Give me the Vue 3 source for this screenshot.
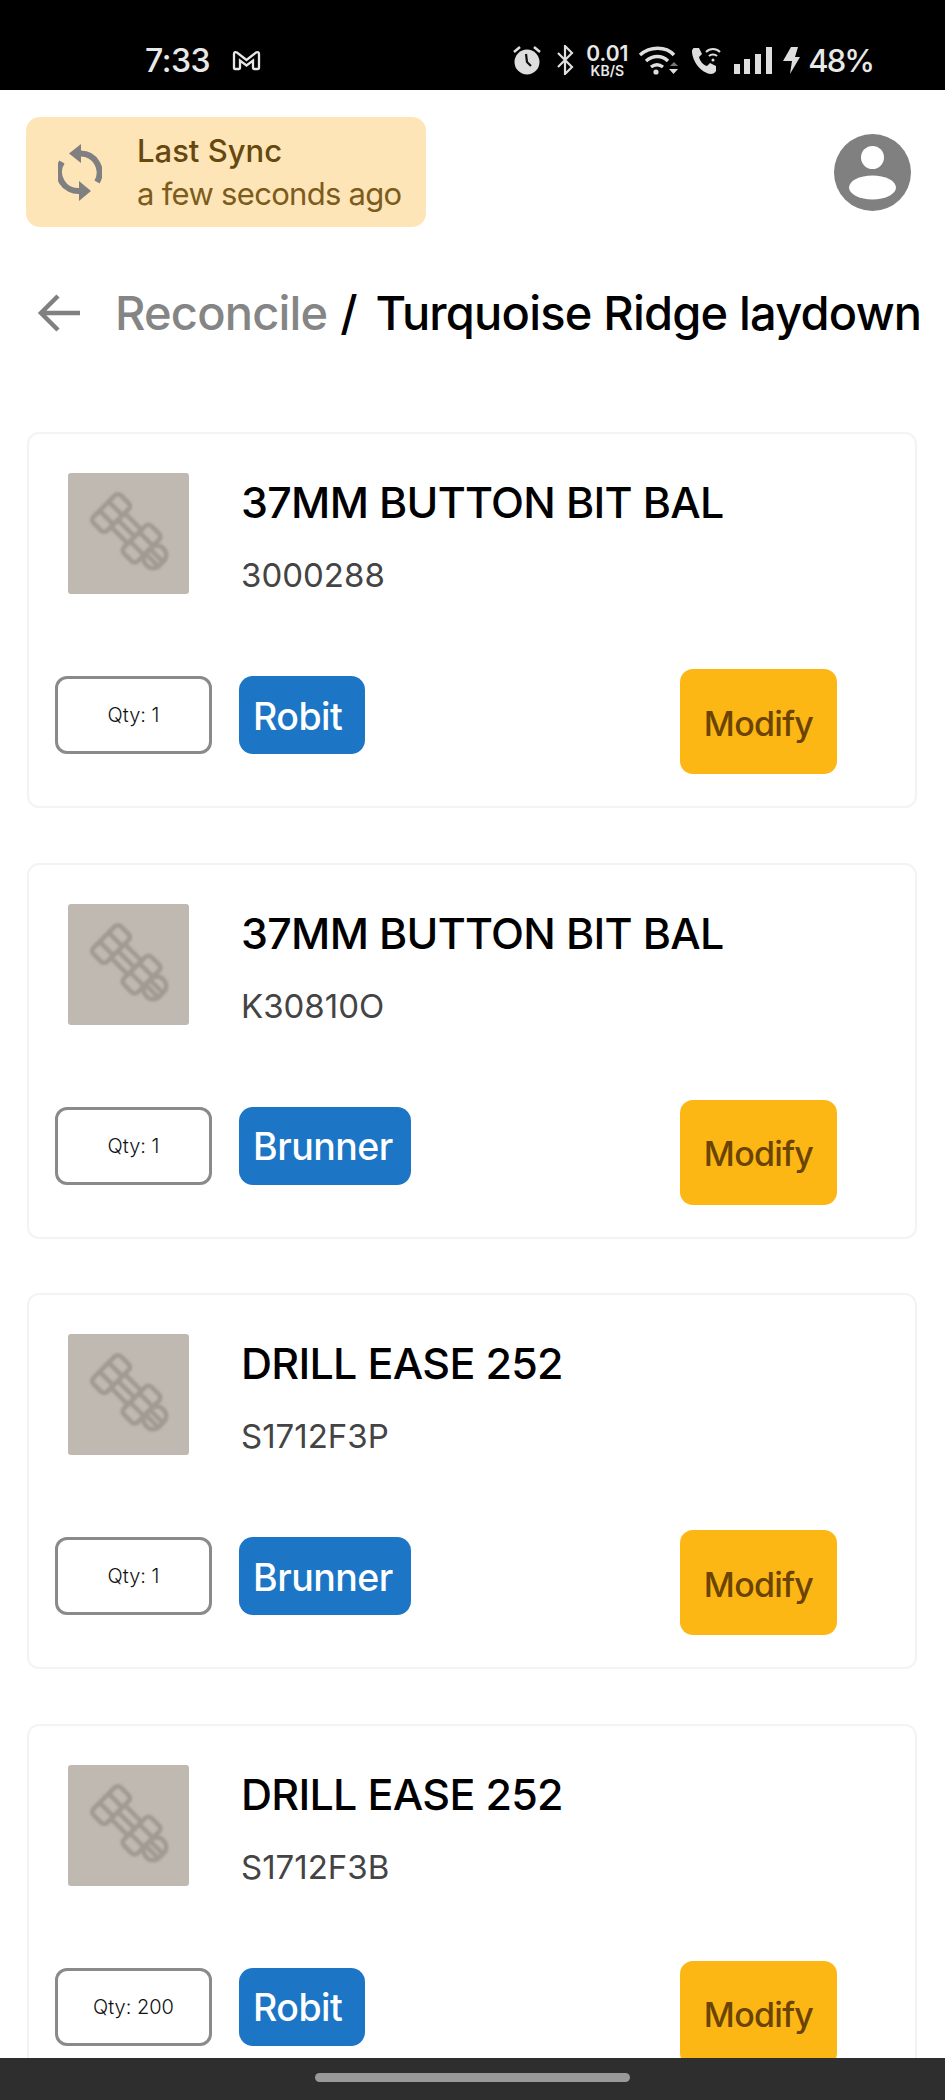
<script setup>
const items = [
  { id: 1, name: '37MM BUTTON BIT BAL', sku: '3000288', qty: 1, brand: 'Robit' },
  { id: 2, name: '37MM BUTTON BIT BAL', sku: 'K30810O', qty: 1, brand: 'Brunner' },
  { id: 3, name: 'DRILL EASE 252', sku: 'S1712F3P', qty: 1, brand: 'Brunner' },
  { id: 4, name: 'DRILL EASE 252', sku: 'S1712F3B', qty: 200, brand: 'Robit' }
]
</script>

<template>
  <div class="screen">
    <div class="status">
      <span class="time">7:33</span>
      <svg class="gmail" viewBox="0 0 29 21" width="29" height="21">
        <path d="M2 18V4Q2 1.500 5 2.500L14.500 10 24 2.500Q27 1.500 27 4V18Q27 19 26 19H22Q21 19 21 18V10.500L14.500 15.500 8 10.500V18Q8 19 7 19H3Q2 19 2 18z" fill="none" stroke="#e8e8e8" stroke-width="2.300" />
      </svg>
      <div class="status-right">
        <svg viewBox="0 0 28 30" width="28" height="30">
          <circle cx="14" cy="17" r="12.500" fill="#dedede" />
          <path d="M1 7l6-5M27 7l-6-5" stroke="#dedede" stroke-width="2.500" />
          <path d="M13 9l1 8 4 4" stroke="#111" stroke-width="2.200" fill="none" />
        </svg>
        <svg class="bt" viewBox="0 0 18 30" width="18" height="30">
          <path d="M2 8l14 14-7 7V1l7 7L2 22" fill="none" stroke="#dedede" stroke-width="2.200" />
        </svg>
        <div class="speed">
          <span class="speed-num">0.01</span>
          <span class="speed-unit">KB/S</span>
        </div>
        <svg class="wifi" viewBox="0 0 40 29" width="40" height="29">
          <path d="M2 9c10-9 26-9 34 0M8 15c7-6 16-6 22 0M13 21c4-3 8-3 12 0" fill="none" stroke="#dedede" stroke-width="3.400" />
          <circle cx="18" cy="26" r="2.600" fill="#dedede" />
          <path d="M32 20l4-4 4 4z" fill="#777" />
          <path d="M31 23h9l-4.500 5z" fill="#dedede" />
        </svg>
        <svg class="call" viewBox="0 0 30 27" width="30" height="27">
          <path d="M3 1l5 0 3 6-3 3c1 4 4 8 8 9l3-3 6 3v5c-1 2-3 3-5 3C10 26 1 14 1 4c0-1 1-3 2-3z" fill="#dedede" />
          <path d="M15 5c4-4 10-4 14 0M18 9c2-2 6-2 8 0" fill="none" stroke="#dedede" stroke-width="2" />
          <circle cx="22" cy="13" r="1.500" fill="#dedede" />
        </svg>
        <svg class="signal" viewBox="0 0 38 27" width="38" height="27">
          <rect x="0" y="17" width="6" height="10" fill="#dedede" />
          <rect x="10" y="12" width="6" height="15" fill="#dedede" />
          <rect x="21" y="7" width="6" height="20" fill="#dedede" />
          <rect x="32" y="0" width="6" height="27" fill="#dedede" />
        </svg>
        <svg class="bolt" viewBox="0 0 17 27" width="17" height="27">
          <path d="M8 0h7l-3 10h5L7 27l2-13H0z" fill="#dedede" />
        </svg>
        <span class="battery">48%</span>
      </div>
    </div>

    <div class="top-row">
      <div class="sync">
        <svg class="sync-icon" viewBox="18 12 44 60" width="44" height="60">
          <path d="M40 23.500A19 19 0 0 1 57 52M40 61A19 19 0 0 1 22 32" fill="none" stroke="#808080" stroke-width="6" />
          <path d="M41 14L29 23.500 41 33zM39 51L51 61 39 71z" fill="#808080" />
        </svg>
        <div class="sync-text">
          <div class="sync-title">Last Sync</div>
          <div class="sync-sub">a few seconds ago</div>
        </div>
      </div>
      <svg class="avatar" viewBox="0 0 77 77" width="77" height="77">
        <circle cx="38.500" cy="38.500" r="38.500" fill="#808080" />
        <circle cx="38.500" cy="23.500" r="11.500" fill="#fff" />
        <ellipse cx="38.500" cy="53.500" rx="23.500" ry="12" fill="#fff" />
      </svg>
    </div>

    <div class="heading">
      <svg class="back" viewBox="0 0 44 40" width="44" height="40">
        <path d="M43 20H4M21 3L4 20l17 17" fill="none" stroke="#808080" stroke-width="4.500" />
      </svg>
      <h1><span class="crumb">Reconcile</span> <span class="sep">/</span> Turquoise Ridge laydown</h1>
    </div>

    <div class="list">
      <div v-for="item in items" :key="item.id" class="card">
        <div class="card-top">
          <div class="thumb">
            <svg viewBox="0 0 121 121" width="121" height="121">
              <g transform="translate(43 40) rotate(45) scale(1.080)" fill="none" stroke="#a09a92" stroke-width="4.200" stroke-linejoin="round">
                <rect x="-9" y="-18" width="18" height="36" rx="4" />
                <path d="M-9 -6H9M-9 6H9" />
                <rect x="9" y="-9" width="22" height="18" />
                <path d="M9 0H31" />
                <rect x="31" y="-18" width="18" height="36" rx="4" />
                <path d="M31 -6H49M31 6H49" />
                <rect x="49" y="-11" width="17" height="22" rx="8" />
                <path d="M49 -2H66M49 4H66" />
              </g>
            </svg>
          </div>
          <div class="info">
            <div class="name">{{ item.name }}</div>
            <div class="sku">{{ item.sku }}</div>
          </div>
        </div>
        <div class="card-bottom">
          <div class="qty">Qty: {{ item.qty }}</div>
          <div class="brand">{{ item.brand }}</div>
          <button class="modify">Modify</button>
        </div>
      </div>
    </div>

    <div class="nav">
      <div class="pill"></div>
    </div>
  </div>
</template>

<style scoped>
.screen {
  position: relative;
  width: 945px;
  height: 2100px;
  overflow: hidden;
  background: #fff;
  font-family: Inter, "Liberation Sans", sans-serif;
}

.status {
  display: flex;
  align-items: center;
  height: 90px;
  padding: 30px 72px 0 145px;
  box-sizing: border-box;
  background: #000;
  color: #e8e8e8;
}

.time {
  font-size: 32px;
  font-weight: 500;
  letter-spacing: -0.5px;
}

.gmail {
  margin-left: 22px;
}

.status-right {
  display: flex;
  align-items: center;
  margin-left: auto;
}

.bt {
  margin-left: 15px;
}

.speed {
  display: flex;
  flex-direction: column;
  align-items: center;
  margin-left: 11px;
  width: 44px;
  font-weight: 600;
  line-height: 1;
}

.speed-num {
  font-size: 21px;
}

.speed-unit {
  font-size: 14px;
}

.wifi {
  margin-left: 9px;
}

.call {
  margin-left: 13px;
}

.signal {
  margin-left: 13px;
}

.bolt {
  margin-left: 11px;
}

.battery {
  margin-left: 8px;
  font-size: 31px;
  font-weight: 500;
  letter-spacing: -2px;
}

.top-row {
  display: flex;
  justify-content: space-between;
  align-items: center;
  padding: 27px 34px 0 26px;
}

.sync {
  display: flex;
  align-items: center;
  width: 400px;
  height: 110px;
  box-sizing: border-box;
  padding-left: 32px;
  border-radius: 14px;
  background: #fee5b8;
}

.sync-text {
  margin-left: 35px;
  font-size: 31px;
  line-height: 43px;
}

.sync-title {
  font-weight: 500;
  color: #66480f;
}

.sync-sub {
  letter-spacing: -0.700px;
  color: #7c5c1c;
}

.heading {
  display: flex;
  align-items: center;
  margin-top: 58px;
  padding-left: 37px;
}

.back {
  flex-shrink: 0;
}

h1 {
  margin: 0 0 0 34px;
  font-size: 47px;
  font-weight: 500;
  line-height: 56px;
  letter-spacing: -0.800px;
  color: #000;
  white-space: nowrap;
}

.crumb {
  color: #858585;
  margin-right: 1px;
}

.sep {
  margin-right: 7px;
}

.list {
  display: flex;
  flex-direction: column;
  gap: 54.500px;
  margin-top: 91px;
  padding-left: 27px;
}

.card {
  width: 890px;
  height: 376px;
  flex-shrink: 0;
  box-sizing: border-box;
  padding: 39px 78px 0 26px;
  border: 2px solid #f3f3f6;
  border-radius: 12px;
}

.card-top {
  display: flex;
  margin-left: 13px;
}

.thumb {
  width: 121px;
  height: 121px;
  flex-shrink: 0;
  border-radius: 3px;
  background: #c0b9b2;
}

.thumb svg {
  display: block;
  filter: blur(0.8px);
}

.info {
  margin-left: 52px;
}

.name {
  margin-top: 4px;
  font-size: 43px;
  font-weight: 500;
  line-height: 50px;
  letter-spacing: -0.700px;
  color: #000;
}

.sku {
  margin-top: 29px;
  font-size: 33px;
  line-height: 38px;
  color: #444;
}

.card-bottom {
  display: flex;
  align-items: flex-start;
  margin-top: 75px;
}

.qty {
  display: flex;
  align-items: center;
  justify-content: center;
  width: 157px;
  height: 78px;
  margin-top: 7px;
  box-sizing: border-box;
  border: 3px solid #8a8a8a;
  border-radius: 12px;
  font-size: 20px;
  font-weight: 300;
  color: #111;
}

.brand {
  display: flex;
  align-items: center;
  min-width: 126px;
  height: 78px;
  margin-top: 7px;
  margin-left: 27px;
  padding: 2px 18px 0 14px;
  box-sizing: border-box;
  border-radius: 14px;
  background: #1c76c5;
  font-size: 37.500px;
  font-weight: 500;
  letter-spacing: -0.500px;
  color: #fff;
}

.modify {
  width: 157px;
  height: 105px;
  margin-left: auto;
  padding: 3px 0 0;
  border: none;
  border-radius: 13px;
  background: #fdb714;
  font-family: inherit;
  font-size: 34px;
  font-weight: 500;
  letter-spacing: -0.700px;
  color: #6a4400;
}

.nav {
  position: absolute;
  left: 0;
  right: 0;
  bottom: 0;
  display: flex;
  justify-content: center;
  height: 42px;
  padding-top: 15px;
  box-sizing: border-box;
  background: #2e2e2e;
}

.pill {
  width: 315px;
  height: 9px;
  border-radius: 5px;
  background: #999;
}
</style>
